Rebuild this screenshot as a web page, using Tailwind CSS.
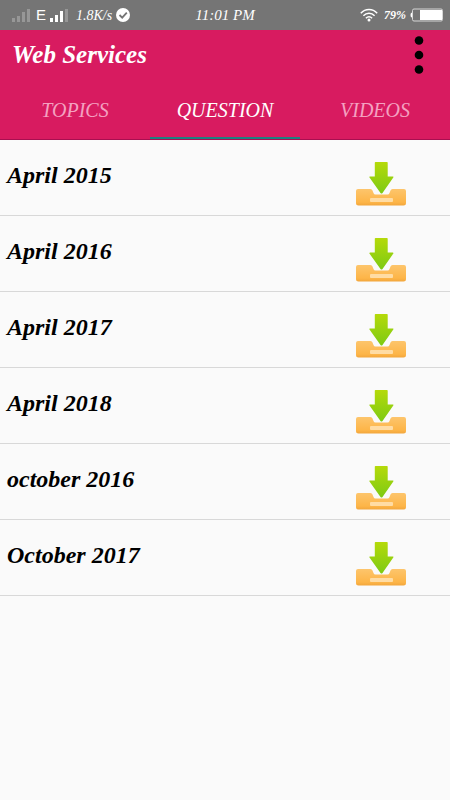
<!DOCTYPE html>
<html lang="en">
<head>
    <meta charset="UTF-8">
    <meta name="viewport" content="width=device-width, initial-scale=1.0">
    <title>Web Services</title>
    <script src="https://cdn.jsdelivr.net/npm/@tailwindcss/browser@4"></script>
</head>
<body class="min-h-screen bg-[#fafafa] font-['Liberation_Serif',serif] italic text-black">

    <!-- Shared download icon -->
    <svg class="absolute h-0 w-0" aria-hidden="true">
        <defs>
            <linearGradient id="arrowFill" x1="0" y1="0" x2="0" y2="1">
                <stop offset="0" stop-color="#b5da0a" />
                <stop offset="1" stop-color="#7dca14" />
            </linearGradient>
            <linearGradient id="trayFill" x1="0" y1="0" x2="0" y2="1">
                <stop offset="0" stop-color="#fdc56c" />
                <stop offset="0.8" stop-color="#fdb548" />
                <stop offset="1" stop-color="#f2a63c" />
            </linearGradient>
        </defs>
        <symbol id="download" viewBox="0 0 52 46">
            <path d="M3 28h12.500q1.500 0 2 1.500l1 2.500q.5 1.500 2 1.500h12q1.500 0 2-1.500l1-2.500q.5-1.500 2-1.500H49q2 0 2 2v12q0 2.500-2.500 2.500h-45Q1 44.500 1 42V30q0-2 2-2z" fill="url(#trayFill)" />
            <rect x="15" y="37" width="23" height="4" rx="1" fill="#ffdca4" />
            <path d="M20.500 1h11.500q.7 0 .7.700V15.500h5q1.400 0 .6 1.100L27.500 32q-1 1.200-2 0L14.500 16.600q-.8-1.100.6-1.100h4.700V1.700q0-.7.700-.7z" fill="url(#arrowFill)" />
        </symbol>
    </svg>

    <!-- Status bar -->
    <div class="grid h-[30px] grid-cols-3 items-center bg-[#757575] text-white">
        <div class="flex items-center pl-3">
            <svg class="h-[14px] w-[19px]" viewBox="0 0 19 14" fill="#979797">
                <path d="M0 10h3v4H0zM5 8h3v6H5zM10 4h3v10h-3zM15 1h3v13h-3z" />
            </svg>
            <span class="ml-[5px] font-['Liberation_Sans',sans-serif] text-[15px] not-italic">E</span>
            <svg class="ml-1 h-[14px] w-[18px]" viewBox="0 0 18 14" fill="#fff">
                <path d="M0 10h3v4H0zM5 7h3v7H5zM10 3h3v11h-3z" />
                <path d="M15 1h3v13h-3z" fill="#979797" />
            </svg>
            <span class="ml-2 text-[14px] whitespace-nowrap">1.8K/s</span>
            <svg class="ml-1 h-[14px] w-[14px] shrink-0" viewBox="0 0 14 14">
                <circle cx="7" cy="7" r="7" fill="#fff" />
                <path d="M3.500 7l2.700 2.700 4.600-5" fill="none" stroke="#757575" stroke-width="1.800" />
            </svg>
        </div>
        <div class="text-center text-[15px]">11:01 PM</div>
        <div class="flex items-center justify-end pr-[7px]">
            <svg class="h-[14px] w-[18px]" viewBox="0 0 18 14" fill="none" stroke="#fff" stroke-width="1.500">
                <path d="M.8 5.200C5.500.3 12.500.3 17.200 5.200M3.400 7.800c3.200-3.300 8-3.300 11.200 0M5.900 10.200c1.900-1.900 4.300-1.900 6.200 0" />
                <circle cx="9" cy="12" r="1.500" fill="#fff" stroke="none" />
            </svg>
            <span class="ml-[6px] text-[12px] font-bold">79%</span>
            <svg class="ml-1 h-[14px] w-[33px]" viewBox="0 0 33 14">
                <path d="M2 4.500Q.5 4.500.5 7t1.500 2.500z" fill="#fff" />
                <rect x="2.500" y="1" width="30" height="12" rx="1.500" fill="#757575" stroke="#d6d6d6" />
                <rect x="10" y="2" width="22" height="10" fill="#fff" />
            </svg>
        </div>
    </div>

    <!-- App bar and tabs -->
    <header class="bg-[#d81b60] text-white">
        <div class="flex h-[50px] items-center justify-between pr-[26px] pl-3">
            <h1 class="text-[25px] leading-8 font-bold">Web Services</h1>
            <button type="button" aria-label="More options">
                <svg class="h-[38px] w-[10px]" viewBox="0 0 10 38" fill="#000">
                    <circle cx="5" cy="4.500" r="4.300" />
                    <circle cx="5" cy="19" r="4.300" />
                    <circle cx="5" cy="33.500" r="4.300" />
                </svg>
            </button>
        </div>
        <nav class="grid h-[60px] grid-cols-3 border-b border-[#a80f50] text-[20px]">
            <button type="button" class="border-b-2 border-transparent pt-[3px] text-[#f4a1c0]">TOPICS</button>
            <button type="button" class="border-b-2 border-[#1d8080] pt-[3px]">QUESTION</button>
            <button type="button" class="border-b-2 border-transparent pt-[3px] text-[#f4a1c0]">VIDEOS</button>
        </nav>
    </header>

    <!-- Question papers -->
    <ul class="text-[24px] font-bold">
        <li class="flex h-[76px] items-start justify-between border-b border-[#d8d8d8] pr-[43px] pl-[7px]">
            <span class="pt-[19px] leading-8">April 2015</span>
            <button type="button" class="pt-[21px]" aria-label="Download April 2015"><svg class="h-[46px] w-[52px]"><use href="#download" /></svg></button>
        </li>
        <li class="flex h-[76px] items-start justify-between border-b border-[#d8d8d8] pr-[43px] pl-[7px]">
            <span class="pt-[19px] leading-8">April 2016</span>
            <button type="button" class="pt-[21px]" aria-label="Download April 2016"><svg class="h-[46px] w-[52px]"><use href="#download" /></svg></button>
        </li>
        <li class="flex h-[76px] items-start justify-between border-b border-[#d8d8d8] pr-[43px] pl-[7px]">
            <span class="pt-[19px] leading-8">April 2017</span>
            <button type="button" class="pt-[21px]" aria-label="Download April 2017"><svg class="h-[46px] w-[52px]"><use href="#download" /></svg></button>
        </li>
        <li class="flex h-[76px] items-start justify-between border-b border-[#d8d8d8] pr-[43px] pl-[7px]">
            <span class="pt-[19px] leading-8">April 2018</span>
            <button type="button" class="pt-[21px]" aria-label="Download April 2018"><svg class="h-[46px] w-[52px]"><use href="#download" /></svg></button>
        </li>
        <li class="flex h-[76px] items-start justify-between border-b border-[#d8d8d8] pr-[43px] pl-[7px]">
            <span class="pt-[19px] leading-8">october 2016</span>
            <button type="button" class="pt-[21px]" aria-label="Download october 2016"><svg class="h-[46px] w-[52px]"><use href="#download" /></svg></button>
        </li>
        <li class="flex h-[76px] items-start justify-between border-b border-[#d8d8d8] pr-[43px] pl-[7px]">
            <span class="pt-[19px] leading-8">October 2017</span>
            <button type="button" class="pt-[21px]" aria-label="Download October 2017"><svg class="h-[46px] w-[52px]"><use href="#download" /></svg></button>
        </li>
    </ul>

</body>
</html>
